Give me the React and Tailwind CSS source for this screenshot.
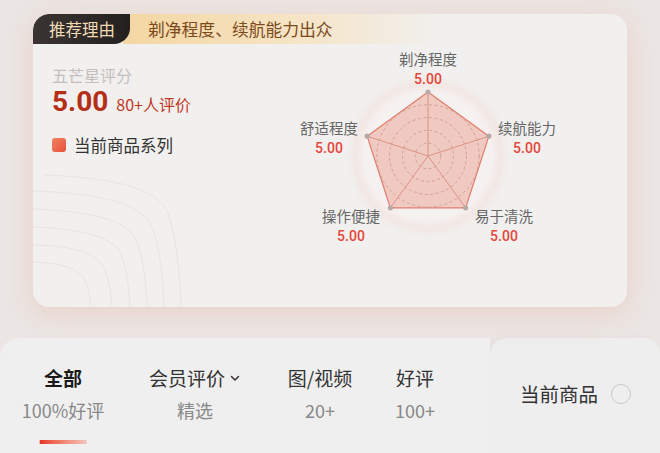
import React from "react";

const F = { fontFamily: '"Noto Sans CJK SC", "Noto Sans", sans-serif' };

function Radar() {
  const cx = 150, cy = 112, R = 64;
  const ang = [-90, -18, 54, 126, 198];
  const pts = ang.map((a) => [cx + R * Math.cos((a * Math.PI) / 180), cy + R * Math.sin((a * Math.PI) / 180)]);
  const poly = pts.map((p) => p.join(",")).join(" ");
  return (
    <svg width="300" height="210" viewBox="0 0 300 210" className="absolute left-0 top-0">
      <defs>
        <radialGradient id="glow" cx="50%" cy="50%" r="50%">
          <stop offset="0%" stopColor="#f6f3f2" />
          <stop offset="78%" stopColor="#f5f1f0" />
          <stop offset="90%" stopColor="#f2e2dd" stopOpacity="0.6" />
          <stop offset="100%" stopColor="#f0e6e3" stopOpacity="0" />
        </radialGradient>
      </defs>
      <circle cx={cx} cy={cy} r="82" fill="url(#glow)" />
      <polygon points={poly} fill="#eba99b" fillOpacity="0.55" stroke="#e07d6c" strokeWidth="1.2" />
      {[12.8, 25.6, 38.4, 51.2].map((r) => (
        <circle key={r} cx={cx} cy={cy} r={r} fill="none" stroke="#cf9a90" strokeWidth="0.9" strokeDasharray="3 2.5" />
      ))}
      {pts.map((p, i) => (
        <line key={i} x1={cx} y1={cy} x2={p[0]} y2={p[1]} stroke="#d98b7d" strokeWidth="0.9" />
      ))}
      {pts.map((p, i) => (
        <circle key={"d" + i} cx={p[0]} cy={p[1]} r="2.6" fill="#b9aaa6" />
      ))}
    </svg>
  );
}

function Lab({ pos, name }) {
  return (
    <div className={"absolute -translate-x-1/2 flex flex-col items-center whitespace-nowrap " + pos}>
      <div className="text-[14.5px] leading-[20px] text-[#666]">{name}</div>
      <div className="text-[14px] leading-[20px] font-medium text-[#e5463a]" style={{ fontFamily: "Roboto, sans-serif" }}>5.00</div>
    </div>
  );
}

export default function App() {
  return (
    <div className="w-[660px] h-[453px] overflow-hidden bg-[#ebe6e4] relative" style={F}>
      <div className="pt-[14px] px-[33px]">
        <div className="relative w-[594px] h-[293px] rounded-[16px] bg-[#f1f0ef] shadow-[0_6px_28px_rgba(236,165,145,0.35)] overflow-hidden">
          <svg width="260" height="140" viewBox="0 0 260 140" className="absolute left-0 bottom-0">
            {[
              "M0 95 C20 96 40 98 50 110 C55 118 57 130 58 140",
              "M0 78 C30 79 55 82 68 96 C75 106 78 125 79 140",
              "M0 60 C40 62 70 66 85 82 C93 94 96 120 97 140",
              "M0 42 C50 44 85 50 100 68 C110 82 113 115 114 140",
              "M0 24 C60 26 100 34 116 54 C126 70 130 110 131 140",
              "M10 8 C70 10 115 18 132 40 C142 58 147 105 148 140",
            ].map((d, i) => (
              <path key={i} d={d} fill="none" stroke="#ebe2df" strokeWidth="1" />
            ))}
          </svg>
          <div className="flex h-[30px] relative">
            <div className="absolute left-[90px] top-0 h-[30px] w-[320px] bg-gradient-to-r from-[#f4d6a2] via-[#f6e3c2] to-transparent" />
            <div className="relative z-10 w-[97px] h-[30px] rounded-tl-[16px] rounded-br-[16px] bg-gradient-to-r from-[#3a3533] to-[#24201f] flex items-center pl-[16px]">
              <span className="text-[16.5px] leading-none text-[#f2dbb4]">推荐理由</span>
            </div>
            <div className="relative z-10 flex items-center pl-[18px]">
              <span className="text-[16.8px] leading-none text-[#7d4a1c]">剃净程度、续航能力出众</span>
            </div>
          </div>
          <div className="flex">
            <div className="w-[245px] pl-[19px] pt-[21px] flex flex-col">
              <div className="text-[16px] leading-[20px] text-[#c4bfbd]">五芒星评分</div>
              <div className="flex items-baseline mt-[1px]">
                <span className="text-[28px] leading-[32px] font-bold text-[#b52e16]" style={{ fontFamily: "Roboto, sans-serif" }}>5.00</span>
                <span className="ml-[8px] text-[16px] text-[#c0391f]">80+人评价</span>
              </div>
              <div className="flex items-center mt-[16px]">
                <div className="w-[14px] h-[14px] rounded-[3px] bg-gradient-to-br from-[#f2825f] to-[#e6503c]" />
                <span className="ml-[8px] text-[16.5px] leading-[22px] text-[#333]">当前商品系列</span>
              </div>
            </div>
            <div className="relative w-[300px] h-[210px]">
              <Radar />
              <Lab pos="left-[150px] top-[5px]" name="剃净程度" />
              <Lab pos="left-[51px] top-[74px]" name="舒适程度" />
              <Lab pos="left-[249px] top-[74px]" name="续航能力" />
              <Lab pos="left-[73px] top-[162px]" name="操作便捷" />
              <Lab pos="left-[226px] top-[162px]" name="易于清洗" />
            </div>
          </div>
        </div>
      </div>
      <div className="mt-[31px] flex h-[115px]">
        <div className="w-[490px] h-full bg-[#efefef] rounded-tl-[20px] relative">
          <div className="absolute left-[63px] top-[25px] -translate-x-1/2 flex flex-col items-center whitespace-nowrap">
            <span className="text-[19px] leading-[30px] font-bold text-[#1a1a1a]">全部</span>
            <span className="text-[18px] leading-[34px] text-[#888]">100%好评</span>
            <div className="mt-[13px] w-[47px] h-[4px] bg-gradient-to-r from-[#e5321e] to-[#f3c4bd]" />
          </div>
          <div className="absolute left-[195px] top-[25px] -translate-x-1/2 flex flex-col items-center whitespace-nowrap">
            <span className="text-[19px] leading-[30px] text-[#333] flex items-center">会员评价
              <svg width="12" height="12" viewBox="0 0 12 12" className="ml-[4px]"><path d="M2.5 4.5 L6 8 L9.5 4.5" fill="none" stroke="#333" strokeWidth="1.5" strokeLinecap="round" strokeLinejoin="round" /></svg>
            </span>
            <span className="text-[18px] leading-[34px] text-[#888]">精选</span>
          </div>
          <div className="absolute left-[320px] top-[25px] -translate-x-1/2 flex flex-col items-center whitespace-nowrap">
            <span className="text-[19px] leading-[30px] text-[#333]">图/视频</span>
            <span className="text-[18px] leading-[34px] text-[#888]">20+</span>
          </div>
          <div className="absolute left-[415px] top-[25px] -translate-x-1/2 flex flex-col items-center whitespace-nowrap">
            <span className="text-[19px] leading-[30px] text-[#333]">好评</span>
            <span className="text-[18px] leading-[34px] text-[#888]">100+</span>
          </div>
        </div>
        <div className="flex-1 h-full bg-[#eeeeee] rounded-tl-[16px] rounded-tr-[16px] shadow-[-3px_0_6px_rgba(0,0,0,0.04)] flex items-start pt-[43px] pl-[30px]">
          <span className="text-[19.5px] leading-[26px] text-[#333]">当前商品</span>
          <div className="ml-[13px] mt-[3px] w-[20px] h-[20px] rounded-full border-[1.5px] border-[#c9c9c9]" />
        </div>
      </div>
    </div>
  );
}
